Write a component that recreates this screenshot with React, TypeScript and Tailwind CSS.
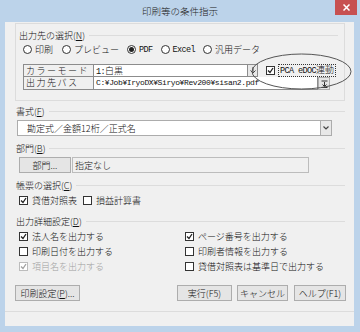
import type { ReactNode } from 'react'

const jp = "font-['Noto_Sans_CJK_JP',sans-serif]"
const mono = "font-['Liberation_Mono','Noto_Sans_CJK_JP',monospace]"

function Key({ k }: { k: string }) {
  return (
    <>
      (<span className="underline">{k}</span>)
    </>
  )
}

function Radio({ label, checked, className = '' }: { label: ReactNode; checked?: boolean; className?: string }) {
  return (
    <div className={`flex items-center gap-[3px] ${className}`}>
      <div className="flex h-[9px] w-[9px] items-center justify-center rounded-full border border-[#333] bg-white">
        {checked && <div className="h-[5px] w-[5px] rounded-full bg-[#222]" />}
      </div>
      <span>{label}</span>
    </div>
  )
}

function Check({ label, checked, disabled }: { label: ReactNode; checked?: boolean; disabled?: boolean }) {
  return (
    <div className={`flex h-[11px] items-center gap-[4px] ${disabled ? 'text-[#a0a0a0]' : ''}`}>
      <div
        className={`flex h-[9px] w-[9px] items-center justify-center border bg-white ${
          disabled ? 'border-[#bcbcbc]' : 'border-[#333]'
        }`}
      >
        {checked && (
          <svg width="7" height="7" viewBox="0 0 7 7">
            <path d="M1 3.5 L3 5.5 L6 1" fill="none" stroke={disabled ? '#a0a0a0' : '#222'} strokeWidth="1.3" />
          </svg>
        )}
      </div>
      <span>{label}</span>
    </div>
  )
}

function Section({ children, className = '' }: { children: ReactNode; className?: string }) {
  return (
    <div className={`flex h-[11px] items-center pl-[11px] pr-[9px] leading-[11px] ${className}`}>
      <span>{children}</span>
      <div className="ml-[4px] h-px flex-1 bg-[#dcdcdc]" />
    </div>
  )
}

function Button({ children, className = '' }: { children: ReactNode; className?: string }) {
  return (
    <div
      className={`flex h-[16px] items-center justify-center border border-[#adadad] bg-[#e5e5e5] leading-none ${className}`}
    >
      {children}
    </div>
  )
}

// half-width latin like the dialog's gothic font
const half = `${mono} text-[8.5px] tracking-[-0.6px]`

export default function App() {
  return (
    <div className={`relative flex h-[332px] w-[360px] flex-col bg-[#bcd3ea] text-[9px] font-light text-[#111] ${jp}`}>
      {/* title bar */}
      <div className="relative flex h-[22px] items-center justify-center">
        <span className="text-[9.5px] text-[#222]">印刷等の条件指示</span>
        <div className="absolute top-0 right-[3px] flex h-[15px] w-[22px] items-center justify-center bg-[#c75050]">
          <svg width="7" height="7" viewBox="0 0 7 7">
            <path d="M0.5 0.5 L6.5 6.5 M6.5 0.5 L0.5 6.5" stroke="#fff" strokeWidth="1.5" />
          </svg>
        </div>
      </div>

      <div className="ml-[5px] mr-[6px] mb-[6px] flex flex-1 flex-col bg-[#f0f0f0] leading-[11px]">
        {/* 出力先の選択 */}
        <div className="mt-px ml-[10px] h-[78px] w-[330px] border border-[#dcdcdc] pl-[3px]">
          <div className="mt-[6px] flex items-center pr-[6px]">
            <span>
              出力先の選択<Key k="N" />
            </span>
            <div className="ml-[4px] h-px flex-1 bg-[#dcdcdc]" />
          </div>
          <div className="mt-[3px] ml-[4px] flex h-[11px] items-center">
            <Radio label="印刷" />
            <Radio className="ml-[9px]" label="プレビュー" />
            <Radio className="ml-[8px]" label={<span className={half}>PDF</span>} checked />
            <Radio className="ml-[8px]" label={<span className={half}>Excel</span>} />
            <Radio className="ml-[8px]" label="汎用データ" />
          </div>
          <div className="mt-[9px] ml-[4px] flex">
            <div className="flex flex-col">
              <div className="flex h-[13px]">
                <div className="w-[71px] border border-[#8c8c8c] pl-[2px] tracking-[1.5px]">カラーモード</div>
                <div className="w-[154px] border-y border-r border-[#8c8c8c] bg-white pl-[2px]">
                  <span className={half}>1:</span>白黒
                </div>
                <div className="flex w-[10px] items-center justify-center border-y border-r border-[#8c8c8c] bg-[#e8e8e8]">
                  <svg width="6" height="7" viewBox="0 0 6 7">
                    <path d="M3 0 V6 M0.5 3.5 L3 6 L5.5 3.5" fill="none" stroke="#444" strokeWidth="1" />
                  </svg>
                </div>
                <div className="ml-[8px] flex items-center gap-[3px]">
                  <div className="flex h-[9px] w-[9px] items-center justify-center border border-[#333] bg-white">
                    <svg width="7" height="7" viewBox="0 0 7 7">
                      <path d="M1 3.5 L3 5.5 L6 1" fill="none" stroke="#222" strokeWidth="1.3" />
                    </svg>
                  </div>
                  <span className="border border-dotted border-[#333] px-px leading-[10px]">
                    <span className={half}>PCA eDOC</span>連動
                  </span>
                </div>
              </div>
              <div className="flex h-[13px]">
                <div className="w-[71px] border-x border-b border-[#8c8c8c] pl-[2px] tracking-[1.5px]">出力先パス</div>
                <div
                  className={`w-[224px] border-r border-b border-[#8c8c8c] bg-white pl-[2px] text-[8px] tracking-[-0.4px] ${mono}`}
                >
                  C:¥Job¥IryoDX¥Siryo¥Rev200¥sisan2.pdf
                </div>
                <div className="flex w-[12px] items-center justify-center border border-[#adadad] bg-[#e5e5e5]">
                  <svg width="7" height="8" viewBox="0 0 7 8">
                    <path d="M0.5 1 H6.5 M3.5 2 V6 M1.5 4.5 L3.5 6.5 L5.5 4.5 M0.5 7.5 H6.5" fill="none" stroke="#333" strokeWidth="1" />
                  </svg>
                </div>
              </div>
            </div>
          </div>
        </div>

        {/* 書式 */}
        <Section className="mt-[5px]">
          書式<Key k="F" />
        </Section>
        <div className="mt-[3px] ml-[12px] flex h-[16px] w-[315px] border border-[#acacac] bg-white">
          <div className="flex flex-1 items-center pl-[9px]">勘定式／金額12桁／正式名</div>
          <div className="flex w-[11px] items-center justify-center border-l border-[#acacac] bg-[#e8e8e8]">
            <svg width="6" height="4" viewBox="0 0 6 4">
              <path d="M0.5 0.5 L3 3 L5.5 0.5" fill="none" stroke="#444" strokeWidth="1.2" />
            </svg>
          </div>
        </div>

        {/* 部門 */}
        <Section className="mt-[7px]">
          部門<Key k="B" />
        </Section>
        <div className="mt-[3px] ml-[14px] flex h-[16px]">
          <Button className="w-[52px]">部門...</Button>
          <div className="ml-px flex w-[237px] items-center border border-[#bcbcbc] bg-[#f0f0f0] pl-[2px]">指定なし</div>
        </div>

        {/* 帳票の選択 */}
        <Section className="mt-[7px]">
          帳票の選択<Key k="C" />
        </Section>
        <div className="mt-[4px] ml-[14px] flex gap-[6px]">
          <Check label="貸借対照表" checked />
          <Check label="損益計算書" />
        </div>

        {/* 出力詳細設定 */}
        <Section className="mt-[10px]">
          出力詳細設定<Key k="D" />
        </Section>
        <div className="mt-[4px] ml-[14px] grid grid-cols-[166px_1fr] gap-y-[4px]">
          <Check label="法人名を出力する" checked />
          <Check label="ページ番号を出力する" checked />
          <Check label="印刷日付を出力する" />
          <Check label="印刷者情報を出力する" />
          <Check label="項目名を出力する" checked disabled />
          <Check label="貸借対照表は基準日で出力する" />
        </div>

        {/* buttons */}
        <div className="mt-[13px] flex">
          <Button className="ml-[10px] w-[65px]">
            印刷設定<Key k="P" />...
          </Button>
          <Button className="ml-[97px] w-[55px]">実行(F5)</Button>
          <Button className="ml-[5px] w-[51px]">キャンセル</Button>
          <Button className="ml-[6px] w-[52px]">ヘルプ(F1)</Button>
        </div>
        <div className="mt-[10px] h-px bg-[#dcdcdc]" />
      </div>

      {/* annotation ellipse */}
      <svg className="pointer-events-none absolute top-[53px] left-[251px]" width="101" height="37" viewBox="0 0 101 37">
        <ellipse cx="50.5" cy="18.5" rx="49.5" ry="17.5" fill="none" stroke="#555" strokeWidth="1" />
      </svg>
    </div>
  )
}
